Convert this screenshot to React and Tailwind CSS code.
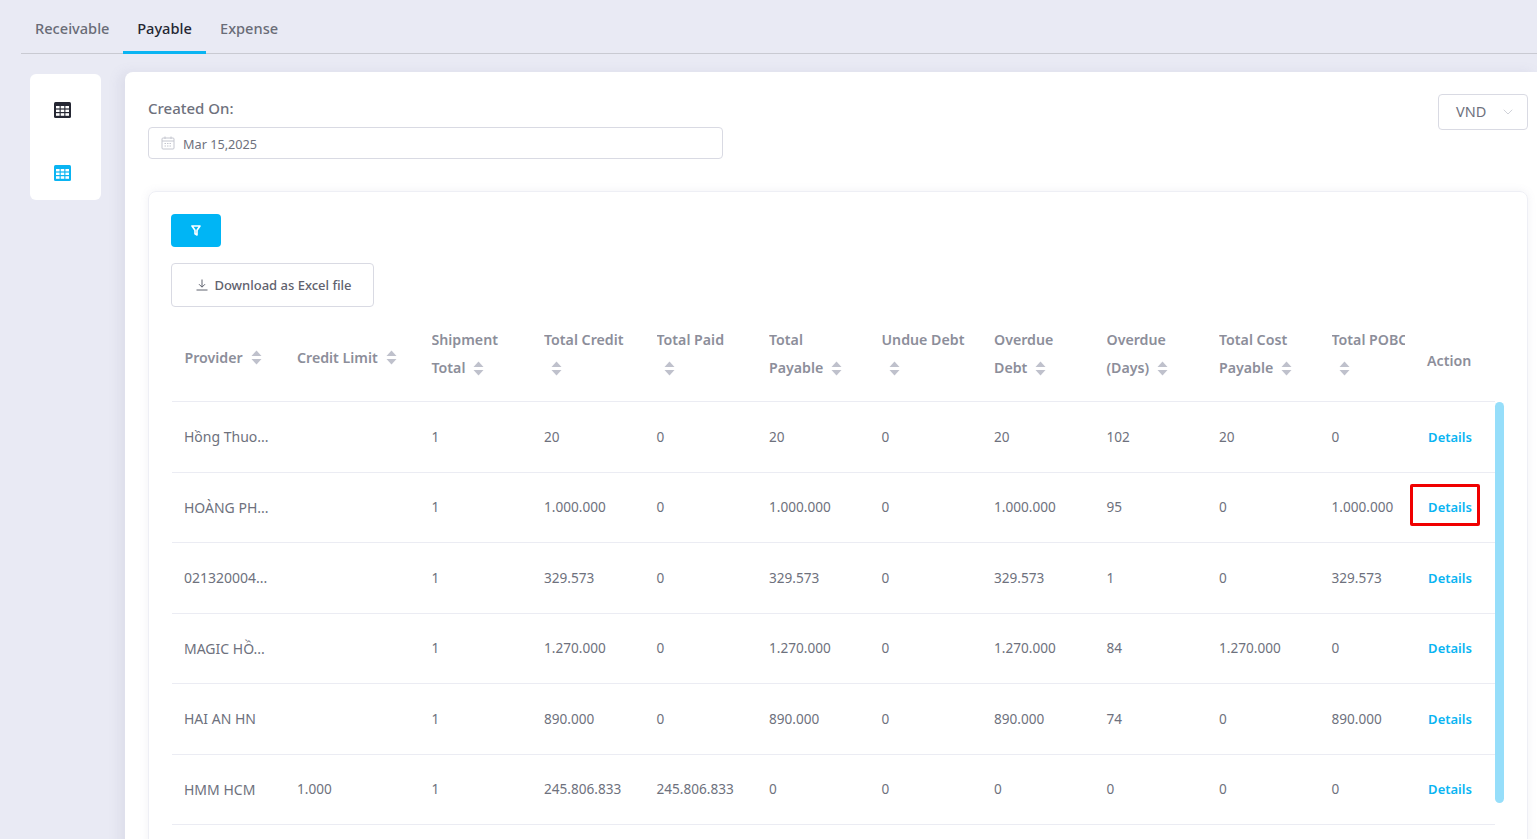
import React from "react";
import { ChevronDown } from "lucide-react";

const rows = [
  { provider: "Hồng Thuo...", limit: "", ship: "1", credit: "20", paid: "0", payable: "20", undue: "0", overdue: "20", days: "102", cost: "20", pobc: "0" },
  { provider: "HOÀNG PH...", limit: "", ship: "1", credit: "1.000.000", paid: "0", payable: "1.000.000", undue: "0", overdue: "1.000.000", days: "95", cost: "0", pobc: "1.000.000", marked: true },
  { provider: "021320004...", limit: "", ship: "1", credit: "329.573", paid: "0", payable: "329.573", undue: "0", overdue: "329.573", days: "1", cost: "0", pobc: "329.573" },
  { provider: "MAGIC HỒ...", limit: "", ship: "1", credit: "1.270.000", paid: "0", payable: "1.270.000", undue: "0", overdue: "1.270.000", days: "84", cost: "1.270.000", pobc: "0" },
  { provider: "HAI AN HN", limit: "", ship: "1", credit: "890.000", paid: "0", payable: "890.000", undue: "0", overdue: "890.000", days: "74", cost: "0", pobc: "890.000" },
  { provider: "HMM HCM", limit: "1.000", ship: "1", credit: "245.806.833", paid: "245.806.833", payable: "0", undue: "0", overdue: "0", days: "0", cost: "0", pobc: "0" },
];

const gridCols = "grid grid-cols-[112.5px_134.5px_repeat(8,112.5px)_96px_80px]";

function GridIcon({ color }) {
  return (
    <svg width="17" height="16" viewBox="0 0 17 16">
      <rect width="17" height="16" rx="1.5" fill={color} />
      <g fill="#fff">
        <rect x="2" y="4" width="3.6" height="2.4" />
        <rect x="6.7" y="4" width="3.6" height="2.4" />
        <rect x="11.4" y="4" width="3.6" height="2.4" />
        <rect x="2" y="7.6" width="3.6" height="2.4" />
        <rect x="6.7" y="7.6" width="3.6" height="2.4" />
        <rect x="11.4" y="7.6" width="3.6" height="2.4" />
        <rect x="2" y="11.2" width="3.6" height="2.6" />
        <rect x="6.7" y="11.2" width="3.6" height="2.6" />
        <rect x="11.4" y="11.2" width="3.6" height="2.6" />
      </g>
    </svg>
  );
}

function SortIcon() {
  return (
    <svg width="11" height="15" viewBox="0 0 11 15" className="inline-block shrink-0">
      <path d="M5.5 0.5 L10.5 6 H0.5 Z" fill="#bfc1cc" />
      <path d="M0.5 9 H10.5 L5.5 14.5 Z" fill="#bfc1cc" />
    </svg>
  );
}

function CalendarIcon() {
  return (
    <svg width="14" height="14" viewBox="0 0 14 14" fill="none" stroke="#c4c6cf" strokeWidth="1">
      <rect x="1" y="2" width="12" height="11" rx="1" />
      <path d="M1 5h12M4 0.5v2.5M10 0.5v2.5" />
      <path d="M3.5 7.5h7M3.5 10h7" strokeDasharray="1.5 1" />
    </svg>
  );
}

function FilterIcon() {
  return (
    <svg width="10" height="11" viewBox="0 0 10 11" fill="none" stroke="#fff" strokeWidth="1.6" strokeLinejoin="round">
      <path d="M1 1h8L6 5.2V10L4 8.8V5.2Z" />
    </svg>
  );
}

function DownloadIcon() {
  return (
    <svg width="12" height="12" viewBox="0 0 12 12" fill="none" stroke="#5f626e" strokeWidth="1">
      <path d="M6 0.5v7.5M3 5.2L6 8.2l3-3M0.5 11h11" />
    </svg>
  );
}

function HeadCell({ top, bottom, sortOnly, single, clip }) {
  if (single) {
    return (
      <div className="flex items-center gap-2 pl-[12.5px] pb-[7px]">
        <span>{single}</span>
        <SortIcon />
      </div>
    );
  }
  return (
    <div className={`flex flex-col justify-center pl-[12.5px] leading-7 pb-[15px] ${clip ? "overflow-hidden pr-[10.5px]" : ""}`}>
      <div className="whitespace-nowrap overflow-hidden">{top}</div>
      <div className="flex items-center gap-2 h-7">
        {bottom && <span>{bottom}</span>}
        <span className={sortOnly ? "pl-[7px] flex" : "flex"}>
          <SortIcon />
        </span>
      </div>
    </div>
  );
}

function Row({ row }) {
  const values = [row.limit, row.ship, row.credit, row.paid, row.payable, row.undue, row.overdue, row.days, row.cost, row.pobc];
  return (
    <div className={`${gridCols} h-[70.5px] pt-[0.6px] border-b border-[#ebecf3] text-[13.6px] text-[#6e717d] items-center`}>
      <div className="pl-3 whitespace-nowrap text-sm">{row.provider}</div>
      {values.map((v, i) => (
        <div key={i} className="pl-[12.5px] whitespace-nowrap">
          {v}
        </div>
      ))}
      <div className="relative flex justify-center pr-[10px] pt-px">
        <span className="text-[13px] font-semibold text-[#0ab4f2]">Details</span>
        {row.marked && (
          <span className="absolute left-[-5px] top-[-13px] w-[70px] h-[42px] border-[3px] border-[#f00000] rounded-[2px]" />
        )}
      </div>
    </div>
  );
}

export default function App() {
  return (
    <div className="h-[839px] overflow-hidden bg-[#e9eaf4] font-['Noto_Sans','Open_Sans',sans-serif] text-[#6e717d]">
      <div className="pl-[21px]">
        <div className="flex h-[54px] border-b border-[#c9cad2] text-[14.6px] font-medium">
          <div className="w-[102px] pl-[14px] pt-[18px] text-[#696c77]">Receivable</div>
          <div className="w-[83px] text-center pt-[18px] text-[#252733] border-b-[3px] border-[#0ab4f2] h-[54px]">Payable</div>
          <div className="pl-[14px] pt-[18px] text-[#696c77]">Expense</div>
        </div>
      </div>

      <div className="flex items-start pl-[30px] pt-[18px]">
        <div className="w-[71px] h-[126px] mt-[2px] pr-[6px] bg-white rounded-md flex flex-col items-center pt-[28px] gap-[47px] shrink-0">
          <GridIcon color="#252733" />
          <GridIcon color="#0ab4f2" />
        </div>

        <div className="ml-6 flex-1 h-[900px] bg-white rounded-tl-lg pl-[23px] pt-[26px] pr-[10px] shadow-[-6px_0_12px_rgba(120,120,160,0.1)]">
          <div className="flex justify-between items-start h-[93px]">
            <div>
              <div className="text-[15px] font-medium text-[#6e717d] leading-5">Created On:</div>
              <div className="mt-[9px] w-[575px] h-8 border border-[#d9dae3] rounded flex items-center pl-3 gap-[8px] text-[12.7px] text-[#6e717d]">
                <CalendarIcon />
                <span className="pt-[3px]">Mar 15,2025</span>
              </div>
            </div>
            <div className="-mt-[4px] w-[90px] h-9 border border-[#d9dae3] rounded flex items-center justify-between pl-[17px] pr-[11px] text-[14.5px]">
              <span>VND</span>
              <ChevronDown size={16} strokeWidth={1.2} color="#c4c6cf" />
            </div>
          </div>

          <div className="h-[800px] border border-[#eeeff5] rounded-lg shadow-[0_0_8px_rgba(120,120,160,0.1)] pl-[22px] pr-[32px] pt-[22px]">
            <button className="w-[50px] h-[33px] bg-[#00b5f5] rounded flex items-center justify-center">
              <FilterIcon />
            </button>
            <button className="mt-4 w-[203px] h-11 border border-[#d9dae3] rounded flex items-center justify-center gap-[6px] pl-[3px] text-[13px] font-medium text-[#5f626e]">
              <DownloadIcon />
              <span className="pt-px">Download as Excel file</span>
            </button>

            <div className="relative mt-[15px] w-[1323px] ml-px">
              <div className={`${gridCols} h-[80px] border-b border-[#ebecf3] text-[14.2px] font-semibold text-[#8c8e9a] items-center`}>
                <HeadCell single="Provider" />
                <HeadCell single="Credit Limit" />
                <HeadCell top="Shipment" bottom="Total" />
                <HeadCell top="Total Credit" sortOnly />
                <HeadCell top="Total Paid" sortOnly />
                <HeadCell top="Total" bottom="Payable" />
                <HeadCell top="Undue Debt" sortOnly />
                <HeadCell top="Overdue" bottom="Debt" />
                <HeadCell top="Overdue" bottom="(Days)" />
                <HeadCell top="Total Cost" bottom="Payable" />
                <HeadCell top="Total POBC" sortOnly clip />
                <div className="pl-3 pb-[2px]">Action</div>
              </div>
              {rows.map((row) => (
                <Row key={row.provider} row={row} />
              ))}
              <div className="absolute left-[1323px] top-[80px] w-[9px] h-[401px] bg-[#96defa] rounded-md" />
            </div>
          </div>
        </div>
      </div>
    </div>
  );
}
